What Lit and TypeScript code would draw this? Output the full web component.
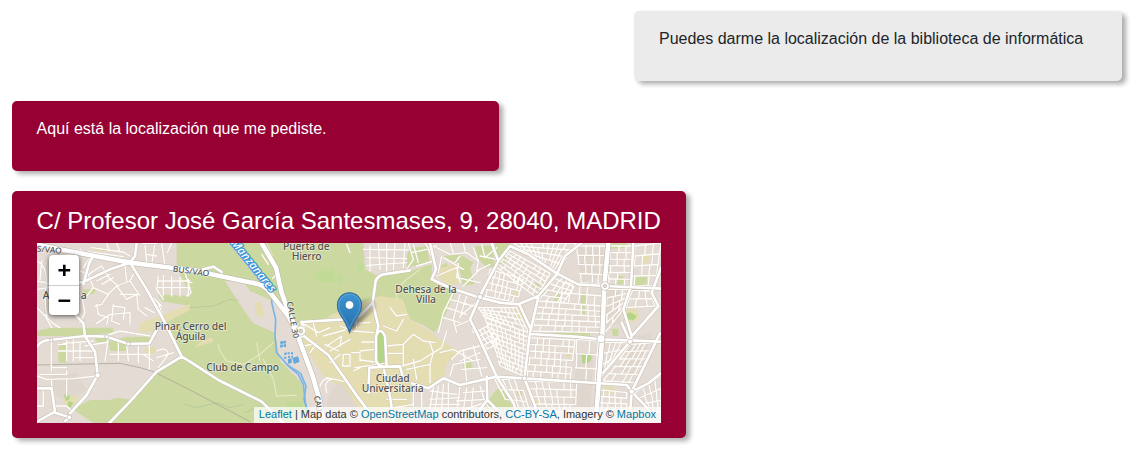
import { LitElement, html, svg, css } from "lit";
import { customElement, property } from "lit/decorators.js";

type Pt = [number, number];
type Quad = [Pt, Pt, Pt, Pt];

/* Streets of a district: evenly spaced lines across a four-cornered block. */
function district(q: Quad, cols: number, rows: number): string {
  const mix = (a: Pt, b: Pt, t: number): Pt => [a[0] + (b[0] - a[0]) * t, a[1] + (b[1] - a[1]) * t];
  const seg = (a: Pt, b: Pt) => `M${a[0].toFixed(1)} ${a[1].toFixed(1)}L${b[0].toFixed(1)} ${b[1].toFixed(1)}`;
  let d = "";
  for (let r = 0; r < rows; r++) {
    const a = mix(q[0], q[3], r / rows), b = mix(q[1], q[2], r / rows);
    d += seg(a, b);
    const a2 = mix(q[0], q[3], (r + 1) / rows), b2 = mix(q[1], q[2], (r + 1) / rows);
    for (let c = 0; c <= cols; c++) {
      // some cross streets stop short, so blocks differ in size
      if ((c * 7 + r * 5) % 6 === 4) continue;
      const shift = ((c * 3 + r * 5) % 4) * 0.07;
      const t = Math.min(1, (c + shift) / cols);
      d += seg(mix(a, b, t), mix(a2, b2, t));
    }
  }
  return d + seg(q[3], q[2]);
}

const PARKS = [
  "M440 21H1000L1005 100L1040 118L1130 108L1205 85L1205 120L1230 140L1278 165L1240 250L1215 290L1180 268L1140 250L1120 215L1060 215L1010 225L940 220L880 250L800 262L740 200L660 165L640 135H585L620 190L640 220L670 262L735 290L750 375L815 440L835 561H238L310 488L380 405L455 362L400 250L465 226L480 208L385 185L388 180L480 180L440 90Z",
  "M128 520L180 492L238 492L262 485L310 492L245 561H190Z",
  "M160 160H200L190 175H160Z",
  "M60 275H250V290L180 296L120 300H20V285Z",
  "M90 322H110V380H85V345ZM190 300H240V318H200ZM235 318L290 302H380L360 320L290 322V345H240Z",
  "M385 175L480 180V210L395 196Z",
  "M1130 60L1140 35L1190 30L1200 80L1150 90L1130 100Z",
  "M1240 60L1290 55L1330 80L1320 95L1260 72ZM1335 30H1385L1395 90L1370 95L1345 70Z",
  "M1235 88L1250 80L1256 100L1240 118L1230 100Z",
  "M1284 82H1318L1332 145L1300 150Z",
  "M1395 21H1440L1425 80L1400 90L1395 60Z",
  "M990 322L1020 318L1035 345V372H992ZM995 482L1060 465L1070 490L1020 510H990ZM1068 395H1115V430L1090 445L1068 425Z",
  "M1075 482H1105V520L1080 530ZM1115 335L1135 332L1140 355L1120 365Z",
  "M1200 350H1230L1235 375L1215 380ZM1300 375H1325V395L1300 400Z",
  "M1370 500L1395 465L1420 450L1450 520H1370Z",
  "M1740 21H1790V35L1740 38ZM1765 120H1780V145H1762ZM1812 125L1850 120V145L1812 148Z",
  "M1515 140L1530 145L1525 160L1512 155ZM1575 175H1590V195H1572ZM1655 170H1668V205H1650ZM1655 210H1665V235H1652Z",
  "M1575 285L1680 290V302H1575ZM1745 278H1765V300H1748ZM1460 463H1475V480H1462ZM1590 520H1610V530H1590ZM1540 430H1555V438H1540Z",
];
const PARKS_DEEP = [
  "M102 478Q112 466 118 480Q122 492 108 494Z",
  "M115 495L130 500L122 515L112 510Z",
  "M1035 300Q1050 275 1064 300V375Q1050 395 1036 375Z",
  "M1654 355Q1685 345 1685 365Q1680 385 1658 382Z",
  "M1783 240L1800 228L1820 240L1812 252L1788 250Z",
];
const PARKS_PALE = [
  "M850 125L880 95L890 115L905 90L920 140L870 135Z",
  "M980 90L1000 85L995 110L985 118Z",
  "M765 500L810 495L820 515L770 520Z",
  "M925 110L940 125L935 150L925 140Z",
];
const CAMPUS = [
  "M800 262L880 250L945 220L1050 180L1118 190L1140 250L1200 285L1215 300L1290 350L1250 380L1245 420L1200 460L1150 440L1130 561H990L940 460L880 420L815 320Z",
  "M330 262L480 205L480 222L405 262L380 285L330 290Z",
  "M520 312L548 305V318L490 335Z",
  "M100 485L140 478L145 495L125 512L105 510Z",
  "M1220 100L1280 80L1290 140L1260 150L1225 125Z",
  "M340 340L370 330L385 345L350 360Z",
  "M675 202L690 195L705 235L690 245L675 230Z",
  "M1830 60L1855 50L1860 75L1840 85Z",
  "M1450 225L1480 215L1490 245L1460 255ZM1450 160H1465V178H1450Z",
  "M1785 225L1815 215L1830 245L1805 262L1785 255Z",
  "M1720 450L1755 455L1750 472H1722ZM1610 340H1625L1620 365H1608ZM1510 490H1530V505H1515Z",
  "M190 35L240 38L235 48L190 44Z",
];
const BLOCKS = [
  "M1640 350H1690L1680 561H1625Z",
  "M1645 30H1720V120L1650 140Z",
  "M1720 160H1770V260L1725 280Z",
  "M930 420L975 460L1010 520L930 515Z",
  "M60 420L140 410L170 460L120 500L80 480Z",
  "M1810 300L1870 290L1810 420L1770 400Z",
];
const BLOCKS_OVER = ["M905 462L930 440L950 460L1000 540L990 561H900L890 500Z"];

const STREETS = [
  // west
  "M100 58L180 48L280 62M150 40L170 60M185 35L280 48L300 60M230 21L238 45M260 21L270 50M345 25L350 80M375 21L365 85M350 55L380 60M395 21L405 90M425 21L412 50",
  "M160 95L180 65M150 105L175 115L190 155L170 180M175 115L215 90M190 155L235 175L260 150L300 135L310 115M215 90L240 130L265 150M235 175L215 205L195 210M260 150L290 190L320 175L325 220L350 240M300 135L330 180M285 90L290 135M200 135L240 115M215 145L250 125",
  "M200 205L205 235L235 245L230 265M250 205L245 255L270 265M250 210L285 215L280 250M300 230V265M325 175L270 175M155 180L165 230L150 260M200 262L240 235L300 230",
  "M385 120L380 160L400 190M400 118V180M425 122V180M450 125V180M475 130V180M385 135H480M385 155H480M370 185L395 210M345 215L372 230M385 200L400 245",
  "M465 110L483 170L470 180M475 140H486",
  "M21 75Q55 90 48 150Q42 210 52 240M21 135L57 142M21 160L57 155M35 75L30 130M21 215L45 240L65 275M45 235Q60 260 90 275",
  "M64 312V405M85 325H110M85 345H110M110 312V375M130 312V375M110 345H190M135 365H190M150 320V375M165 330L235 318M235 302L225 375M265 320V375M325 325V380M290 325L295 375M240 355H360M358 322V400M380 345Q410 330 415 355L385 395M380 365L430 350M340 355L370 375M100 322L190 315M225 300L270 285L360 300",
  "M30 415H110V405M64 395H110M21 420L50 430L130 428L200 420M65 430V455M110 430V480M40 465V510H21M75 510H110L130 530",
  // river bank
  "M705 35L730 80L742 110L728 128M695 55L715 85",
  // campus
  "M815 260L865 290L900 275M850 262L860 300M820 330L860 322L840 350M880 300L945 282M890 330L935 300L930 330M900 345L960 310M885 325L925 345M900 380L930 355M870 450Q880 420 905 430Q880 435 890 470M890 425L960 440",
  "M930 270L970 285L1030 290M975 230L980 275M950 262L1020 260M1060 270L1100 285L1120 250M1080 215L1100 240L1130 235",
  "M940 355H960V390H938ZM965 350H990V375M990 345L1035 340M992 372L1035 378M995 318H1035M990 395L970 405M975 395L1065 382M1068 330L1120 325L1150 295L1180 315L1215 320M1120 325V385M1068 352H1120M1115 390L1170 375L1235 335L1250 285M1130 400L1200 385L1210 350L1200 320M1150 370L1160 430M1200 385V440M1070 490H1130M1150 450V510M1175 455V515M1060 520L1150 505",
  // Ciudad Universitaria edge
  "M1230 350L1270 340L1330 375M1265 370L1290 345L1350 330M1290 375L1350 350M1295 400L1370 395M1260 420L1270 385L1350 370M1330 330L1355 420M1300 340L1310 435M1210 455L1200 515M1225 450L1215 520M1240 445L1235 520M1255 440V520M1200 465L1280 475M1200 490L1290 485M1200 505H1290M1290 450L1280 530M1310 455L1300 525M1330 455L1325 510M1350 450L1365 500M1280 495L1370 490M1300 470L1370 465M1365 500L1290 525M1365 500L1390 530",
  // north
  "M950 25L960 50M1020 30V105M1045 21L1050 100M1070 21V105M1095 21L1090 100M1125 21L1120 95M1000 40L1135 42M1010 65L1130 68M1010 88L1130 80M1135 21L1150 70L1130 100M1150 25L1165 80M1145 50L1190 40M1160 90L1210 75L1195 40L1220 28M1185 21L1210 60",
  "M1210 30L1260 55L1310 50L1345 75L1340 105M1260 21L1270 50M1300 21L1305 45M1220 120L1280 95L1290 140M1285 82L1280 125L1350 140M1240 65L1300 100M1340 105L1380 85M1350 60L1400 70M1235 60L1225 110M1290 60L1275 80M1300 150L1350 100M1330 35L1345 75M1355 25L1365 65L1400 35",
  "M1270 170L1240 230L1225 290M1290 175L1270 250L1280 290M1260 190L1330 210M1250 215L1310 235M1240 245L1290 260M1290 240L1350 190M1280 270L1325 250L1330 290M1310 180L1290 245",
];
const PATHS = "M565 327L570 345L590 375L640 385L690 355L730 320M700 370L730 430L740 480L800 478M690 375L680 320M1100 190L1100 160L1130 130L1170 100M710 21L728 60";

const DISTRICTS: string[] = [
  district([[1440, 45], [1560, 112], [1520, 185], [1395, 90]], 8, 6),
  district([[1380, 100], [1480, 130], [1460, 200], [1365, 180]], 7, 4),
  district([[1450, 21], [1640, 21], [1580, 105], [1500, 60]], 11, 4),
  district([[1585, 110], [1640, 140], [1600, 200], [1525, 195]], 4, 5),
  district([[1525, 195], [1715, 210], [1715, 290], [1500, 285]], 9, 5),
  district([[1600, 140], [1720, 150], [1715, 210], [1590, 200]], 5, 2),
  district([[1640, 30], [1730, 30], [1722, 145], [1650, 140]], 4, 4),
  district([[1740, 30], [1808, 30], [1800, 150], [1735, 148]], 3, 6),
  district([[1815, 30], [1893, 21], [1875, 150], [1808, 150]], 3, 4),
  district([[1730, 160], [1798, 160], [1780, 220], [1725, 290]], 3, 5),
  district([[1808, 162], [1860, 165], [1875, 210], [1785, 215]], 3, 2),
  district([[1345, 215], [1460, 215], [1495, 290], [1360, 240]], 9, 4),
  district([[1365, 245], [1495, 290], [1480, 420], [1410, 390]], 9, 10),
  district([[1335, 290], [1380, 265], [1410, 320], [1370, 340]], 4, 4),
  district([[1500, 305], [1635, 312], [1620, 435], [1490, 425]], 7, 6),
  district([[1490, 435], [1640, 440], [1635, 550], [1525, 550]], 7, 5),
  district([[1640, 310], [1705, 315], [1695, 440], [1635, 438]], 2, 3),
  district([[1720, 318], [1790, 320], [1740, 385], [1715, 420]], 4, 3),
  district([[1800, 325], [1875, 320], [1815, 440], [1720, 435]], 5, 5),
  district([[1700, 460], [1790, 470], [1790, 520], [1695, 520]], 5, 3),
  district([[1815, 470], [1893, 420], [1893, 530], [1850, 520]], 4, 3),
  district([[1395, 430], [1470, 430], [1500, 530], [1440, 520]], 4, 3),
];

const AVENUES = [
  "M300 80L240 100L160 138L90 148M320 21L315 60L300 80L350 160L400 250L455 362M340 21H380M160 145L178 80L190 60",
  "M135 235L160 262L165 300L195 347L203 417L170 477L120 532",
  "M21 332Q35 312 60 312L165 300L230 302L295 324L358 322L380 282",
  "M21 457H65L75 527L21 557M75 530L120 544L105 555",
  "M238 561L300 497L380 407L455 362L480 377L565 432L695 497L760 561",
  "M1140 103L1060 115Q1035 122 1035 150L1028 200L1045 270L1040 295M1028 200L990 240L945 250L815 258",
  "M1060 392Q1035 385 1038 365V300Q1050 270 1065 300L1070 392ZM1060 392L1080 482L1092 561M1015 470L1018 395L1110 390L1120 430M1060 392H1110",
  "M815 295L895 357L930 407L975 472L1030 545",
  "M1145 442L1195 457L1240 427L1290 447L1400 422",
  "M1200 21L1218 100L1205 130L1260 155L1350 185L1410 200L1465 205L1525 180L1580 115L1605 60L1655 21",
  "M1385 21L1405 75L1440 30L1495 55L1580 112L1645 145L1725 150L1893 158M1405 75L1355 170L1320 250L1340 290L1400 422L1450 500L1470 561",
  "M1810 21L1803 150L1780 220L1805 300L1800 317M1893 95L1865 170L1885 210L1810 295",
  "M1525 185L1500 290L1483 427L1535 561M1470 210L1500 275M1370 422L1372 492L1400 520M1372 492L1350 520",
  "M1500 294L1635 302L1713 310L1893 317M1395 422L1485 427L1790 447L1805 467L1890 292M1805 467L1800 530M1805 467L1870 535M1805 467L1855 442L1893 412M1800 317L1720 410M1800 317L1775 260",
];
const HIGHWAYS = [
  "M21 26L100 42L300 80L430 96L500 104L545 115L665 140Q700 145 715 163L775 240L800 290L820 345L848 420L868 490L880 561",
  "M695 21L738 95L755 170L782 245L812 300",
  "M1735 21L1723 150L1717 300L1697 561",
];

const LABELS: { text: string; x: number; y: number; w: number }[] = [
  { text: "Puerta de", x: 829, y: 42, w: 140 },
  { text: "Hierro", x: 830, y: 71, w: 90 },
  { text: "Dehesa de la", x: 1188, y: 172, w: 184 },
  { text: "Villa", x: 1188, y: 202, w: 60 },
  { text: "Pinar Cerro del", x: 482, y: 281, w: 216 },
  { text: "Águila", x: 482, y: 311, w: 90 },
  { text: "Club de Campo", x: 638, y: 406, w: 218 },
  { text: "Ciudad", x: 1088, y: 438, w: 102 },
  { text: "Universitaria", x: 1088, y: 468, w: 186 },
  { text: "Aravaca", x: 104, y: 188, w: 132 },
];

@customElement("location-map")
class LocationMap extends LitElement {
  static styles = css`
    :host { display: block; position: relative; height: 180px; overflow: hidden; background: #e4dcd4; }
    .tiles { display: block; width: 100%; height: 100%; }
    .park { fill: #cbd9a0; }
    .deep { fill: #b4d487; }
    .pale { fill: #bfdb96; }
    .campus { fill: #e5ddb2; }
    .block { fill: #dfd6cd; }
    .line { fill: none; stroke-linejoin: round; stroke-linecap: round; }
    .street-edge { stroke: #cfc6bb; stroke-width: 6; opacity: .5; }
    .street { stroke: #fffefb; stroke-width: 4; }
    .path { stroke: #e6ecc9; stroke-width: 3; }
    .avenue-edge { stroke: #c6bfb5; stroke-width: 11; }
    .avenue { stroke: #fff; stroke-width: 8; }
    .highway-edge { stroke: #b8b2a7; stroke-width: 17; }
    .highway { stroke: #fff; stroke-width: 14; }
    .rail { stroke: #aaa59b; stroke-width: 2.4; }
    .brook { stroke: #abc39a; stroke-width: 2; }
    .river { stroke: #79b5e6; stroke-width: 5; }
    .pool { fill: #63a8de; }
    .label { font-family: "Noto Sans", "Open Sans", sans-serif; font-size: 31px; font-weight: 500; fill: #55534f; text-anchor: middle; paint-order: stroke; stroke: #fff9; stroke-width: 4; stroke-linejoin: round; }
    .road-name { font-size: 25px; }
    .water-name { font-size: 34px; font-style: italic; fill: #fff; stroke: #3a94dd; stroke-width: 7; }
    .zoom { position: absolute; left: 12px; top: 12px; width: 30px; border-radius: 4px; box-shadow: 0 1px 5px rgba(0, 0, 0, .65); background: #fff; }
    .zoom-key { display: block; box-sizing: border-box; width: 30px; height: 30px; text-align: center; font: bold 22px/32px "Liberation Sans", sans-serif; color: #000; }
    .zoom-key + .zoom-key { box-shadow: inset 0 1px #ccc; border-radius: 0 0 4px 4px; }
    .glyph { display: inline-block; transform: scale(1.06, 1); }
    .credits { position: absolute; right: 0; bottom: 0; height: 16px; padding: 0 5px; background: rgba(255, 255, 255, .7); color: #333; font: 11px/15px "Liberation Sans", Arial, sans-serif; white-space: nowrap; }
    .link { color: #0078a8; text-decoration: none; }
  `;

  private fills(items: string[], cls: string) {
    return items.map((d) => svg`<path class=${cls} d=${d}></path>`);
  }

  private lines(items: string[], cls: string) {
    return svg`<path class=${"line " + cls} d=${items.join("")}></path>`;
  }

  render() {
    const streets = [...STREETS, ...DISTRICTS];
    return html`
      <svg class="tiles" viewBox="21 21 1872 540" preserveAspectRatio="none">
        <defs>
          <linearGradient id="pin" x1="0" y1="0" x2="0" y2="1"><stop offset="0" stop-color="#3e95d2"></stop><stop offset="1" stop-color="#246cac"></stop></linearGradient>
          <linearGradient id="pinShade" x1="0" y1="1" x2="1" y2="0"><stop offset="0" stop-color="#000" stop-opacity=".6"></stop><stop offset="1" stop-color="#000" stop-opacity=".04"></stop></linearGradient>
          <filter id="soft" x="-30%" y="-30%" width="160%" height="160%"><feGaussianBlur stdDeviation="5"></feGaussianBlur></filter>
        </defs>
        ${this.fills(BLOCKS, "block")}
        ${this.fills(PARKS, "park")}
        ${this.fills(CAMPUS, "campus")}
        ${this.fills(BLOCKS_OVER, "block")}
        ${this.fills(PARKS_DEEP, "deep")}
        ${this.fills(PARKS_PALE, "pale")}
        <path class="line brook" d="M465 505L500 515L560 500L600 515L640 505M645 530L690 510M480 215L550 210L600 190L625 193"></path>
        <path class="line rail" d="M21 387L270 382L330 395L370 407L465 454L660 557"></path>
        <path class="line path" d=${PATHS}></path>
        ${this.lines(streets, "street-edge")}
        ${this.lines(streets, "street")}
        <path class="line river" d="M610 21L650 75L700 130L728 165L725 200L737 250L735 300L740 350L775 390L805 415L820 445L826 500L832 540"></path>
        <path class="line river" d="M770 385L812 412L828 450L822 490L835 530"></path>
        <path class="pool" d="M750 317l8-3 2 8-8 3zM760 315l8-1 0 8-8 1zM750 327l8-2 1 8-8 2zM761 325h7v8h-7zM762 352l7-3 2 6-7 3zM773 349h6v6h-6zM783 349h6v6h-6zM762 362h7v6h-7zM774 360h6v6h-6zM784 359h5v6h-5zM773 370l12-3 0 14-10 2zM787 366l17-5 5 16-17 7z"></path>
        ${this.lines(AVENUES, "avenue-edge")}
        ${this.lines(HIGHWAYS, "highway-edge")}
        <path class="line avenue-edge" d="M520 100L550 92L575 108"></path>
        ${this.lines(AVENUES, "avenue")}
        ${this.lines(HIGHWAYS, "highway")}
        <path class="line avenue" d="M520 100L550 92L575 108M815 258L825 285"></path>
        <g fill="#fff" stroke="#bdb6ad" stroke-width="2">
          <circle cx="203" cy="418" r="8"></circle><circle cx="118" cy="544" r="7"></circle>
          <circle cx="64" cy="312" r="5"></circle><circle cx="230" cy="302" r="6"></circle><circle cx="295" cy="324" r="6"></circle>
          <circle cx="1725" cy="150" r="13"></circle><circle cx="1713" cy="308" r="12"></circle>
          <circle cx="1800" cy="317" r="8"></circle><circle cx="1805" cy="467" r="8"></circle><circle cx="1483" cy="427" r="7"></circle>
          <circle cx="1350" cy="183" r="8"></circle><circle cx="812" cy="285" r="15"></circle><circle cx="812" cy="285" r="6" fill="#d9d3bd"></circle>
          <circle cx="1725" cy="150" r="5" fill="#e3dbd3"></circle>
        </g>
        <text class="label road-name" transform="translate(57 50) rotate(5)" textLength="76" lengthAdjust="spacingAndGlyphs">S/VAO</text>
        <text class="label road-name" transform="translate(482 114) rotate(8)" textLength="110" lengthAdjust="spacingAndGlyphs">BUS/VAO</text>
        <text class="label road-name" transform="translate(780 253) rotate(80)" textLength="112" lengthAdjust="spacingAndGlyphs">CALLE 30</text>
        <text class="label road-name" transform="translate(857 508) rotate(78)" textLength="54">CALL</text>
        <text class="label water-name" transform="translate(662 96) rotate(51)" textLength="192">Manzanares</text>
        ${LABELS.map((l) => svg`<text class="label" x=${l.x} y=${l.y} textLength=${l.w}>${l.text}</text>`)}
        <path d="M960 289L1034 221Q1050 190 1018 188Q988 190 966 222Z" fill="url(#pinShade)" filter="url(#soft)"></path>
        <path d="M958.5 290C951 268 943 255 930 235Q922 222 922 207A36.5 36.5 0 0 1 995 207Q995 222 987 235C974 255 966 268 958.5 290Z" fill="url(#pin)" stroke="#2e6c97" stroke-width="3"></path>
        <path d="M958.5 278C952 260 944 248 933 232Q926 220 926 207A32.5 32.5 0 0 1 991 207Q991 220 984 232C973 248 965 260 958.5 278Z" fill="none" stroke="#7db8e3" stroke-opacity=".6" stroke-width="2.5"></path>
        <circle cx="958.5" cy="207" r="13" fill="#fff" stroke="#2e6c97" stroke-width="2"></circle>
      </svg>
      <div class="zoom"><span class="zoom-key"><span class="glyph">+</span></span><span class="zoom-key"><span class="glyph">−</span></span></div>
      <div class="credits"><a class="link">Leaflet</a> | Map data © <a class="link">OpenStreetMap</a> contributors, <a class="link">CC-BY-SA</a>, Imagery © <a class="link">Mapbox</a></div>
    `;
  }
}

@customElement("chat-bubble")
class ChatBubble extends LitElement {
  @property({ reflect: true }) from = "bot";
  static styles = css`
    :host { display: block; box-sizing: border-box; width: 487px; padding: 15px 25px 15px 24.6px; border-radius: 5px; background: #970032; color: #fff; box-shadow: 4px 3px 5px rgba(0, 0, 0, .33); }
    :host([from="user"]) { align-self: flex-end; width: 488px; padding-left: 25px; background: #ebebeb; color: #212529; }
    :host([from="place"]) { width: 674px; }
  `;
  render() {
    return html`<slot></slot>`;
  }
}

@customElement("app-root")
class AppRoot extends LitElement {
  static styles = css`
    :host { display: block; box-sizing: border-box; height: 453px; overflow: hidden; background: #fff; font: 16px/24px "Liberation Sans", Arial, sans-serif; }
    .chat { display: flex; flex-direction: column; align-items: flex-start; gap: 20px; padding: 11px 19px 15px 12px; }
    .message { margin: 0; padding: 1px 0 15px; }
    .address { margin: 0 0 8px; font-size: 24px; line-height: 29px; font-weight: 500; white-space: nowrap; }
    .map { margin-left: .4px; }
  `;
  render() {
    return html`
      <div class="chat">
        <chat-bubble from="user"><p class="message">Puedes darme la localización de la biblioteca de informática</p></chat-bubble>
        <chat-bubble><p class="message">Aquí está la localización que me pediste.</p></chat-bubble>
        <chat-bubble from="place">
          <h4 class="address">C/ Profesor José García Santesmases, 9, 28040, MADRID</h4>
          <location-map class="map"></location-map>
        </chat-bubble>
      </div>
    `;
  }
}
